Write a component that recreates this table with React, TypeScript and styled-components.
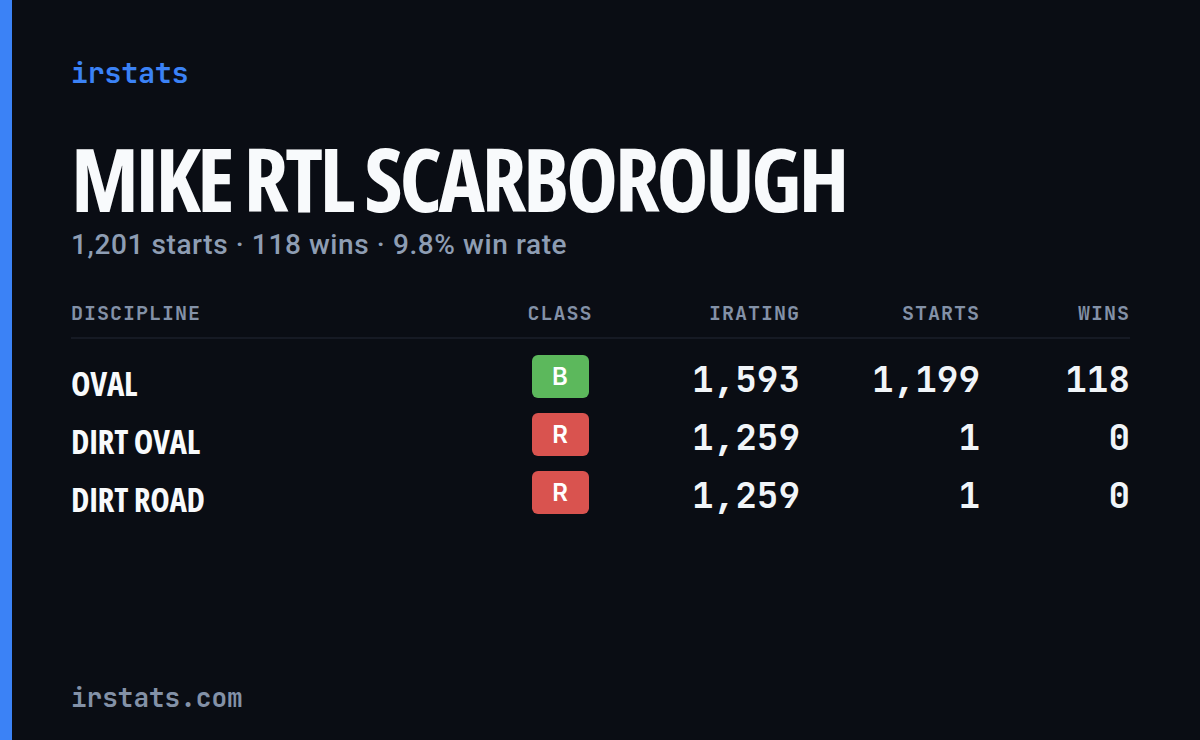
import React from "react";
import styled, { createGlobalStyle } from "styled-components";

const GlobalStyle = createGlobalStyle`
  html, body { margin: 0; padding: 0; background: #0a0d14; }
  * { box-sizing: border-box; }
`;

const MONO = `"JetBrains Mono", "Roboto Mono", "DejaVu Sans Mono", monospace`;
const COND = `"Open Sans", "Roboto Condensed", sans-serif`;

const Card = styled.div`
  width: 1200px;
  height: 740px;
  background: #0a0d14;
  border-left: 12px solid #3b82f6;
  padding: 57px 70px 28px 59px;
  display: flex;
  flex-direction: column;
`;

const Brand = styled.div`
  font-family: ${MONO};
  font-size: 28px;
  line-height: 32px;
  font-weight: 600;
  color: #3b82f6;
`;

const Title = styled.h1`
  margin: 45px 0 0;
  font-family: ${COND};
  font-stretch: 75%;
  font-weight: 700;
  font-size: 88px;
  line-height: 88px;
  letter-spacing: -3.4px;
  color: #f8fafc;
  white-space: nowrap;
`;

const Subtitle = styled.div`
  margin-top: 7px;
  font-family: "Roboto", "Open Sans", sans-serif;
  font-weight: 500;
  font-size: 28px;
  line-height: 32px;
  letter-spacing: 0.6px;
  color: #8e9db3;
`;

const Table = styled.div`
  margin-top: 40px;
  display: flex;
  flex-direction: column;
`;

const Grid = styled.div`
  display: grid;
  grid-template-columns: 1fr 130px 175px 180px 150px;
  align-items: center;
`;

const HeadRow = styled(Grid)`
  padding-bottom: 12px;
  border-bottom: 2px solid #161a24;
`;

const Body = styled.div`
  padding-top: 8px;
`;

const Row = styled(Grid)`
  height: 58px;
`;

const Th = styled.div<{ $align: "left" | "center" | "right" }>`
  font-family: ${MONO};
  font-size: 20px;
  line-height: 24px;
  font-weight: 600;
  letter-spacing: 1px;
  color: #8391a7;
  text-align: ${(p) => p.$align};
`;

const Discipline = styled.div`
  font-family: ${COND};
  font-stretch: 75%;
  font-weight: 700;
  font-size: 33px;
  line-height: 40px;
  letter-spacing: -0.3px;
  color: #f8fafc;
  padding-top: 16px;
`;

const ClassCell = styled.div`
  display: flex;
  justify-content: center;
`;

const Badge = styled.div<{ $bg: string }>`
  width: 57px;
  height: 43px;
  border-radius: 6px;
  background: ${(p) => p.$bg};
  display: flex;
  align-items: center;
  justify-content: center;
  font-family: "Inter", "Open Sans", sans-serif;
  font-weight: 600;
  font-size: 24px;
  color: #ffffff;
`;

const Num = styled.div`
  font-family: ${MONO};
  font-size: 36px;
  line-height: 40px;
  font-weight: 600;
  color: #f1f5f9;
  text-align: right;
  padding-top: 6px;
`;

const Footer = styled.div`
  margin-top: auto;
  font-family: ${MONO};
  font-size: 26px;
  line-height: 28px;
  font-weight: 600;
  color: #8391a7;
`;

type Disc = { name: string; cls: string; color: string; irating: string; starts: string; wins: string };

const rows: Disc[] = [
  { name: "OVAL", cls: "B", color: "#5cb85c", irating: "1,593", starts: "1,199", wins: "118" },
  { name: "DIRT OVAL", cls: "R", color: "#d9534f", irating: "1,259", starts: "1", wins: "0" },
  { name: "DIRT ROAD", cls: "R", color: "#d9534f", irating: "1,259", starts: "1", wins: "0" },
];

export default function App() {
  return (
    <>
      <GlobalStyle />
      <Card>
        <Brand>irstats</Brand>
        <Title>MIKE RTL SCARBOROUGH</Title>
        <Subtitle>1,201 starts · 118 wins · 9.8% win rate</Subtitle>
        <Table>
          <HeadRow>
            <Th $align="left">DISCIPLINE</Th>
            <Th $align="center">CLASS</Th>
            <Th $align="right">IRATING</Th>
            <Th $align="right">STARTS</Th>
            <Th $align="right">WINS</Th>
          </HeadRow>
          <Body>
            {rows.map((r) => (
              <Row key={r.name}>
                <Discipline>{r.name}</Discipline>
                <ClassCell>
                  <Badge $bg={r.color}>{r.cls}</Badge>
                </ClassCell>
                <Num>{r.irating}</Num>
                <Num>{r.starts}</Num>
                <Num>{r.wins}</Num>
              </Row>
            ))}
          </Body>
        </Table>
        <Footer>irstats.com</Footer>
      </Card>
    </>
  );
}
